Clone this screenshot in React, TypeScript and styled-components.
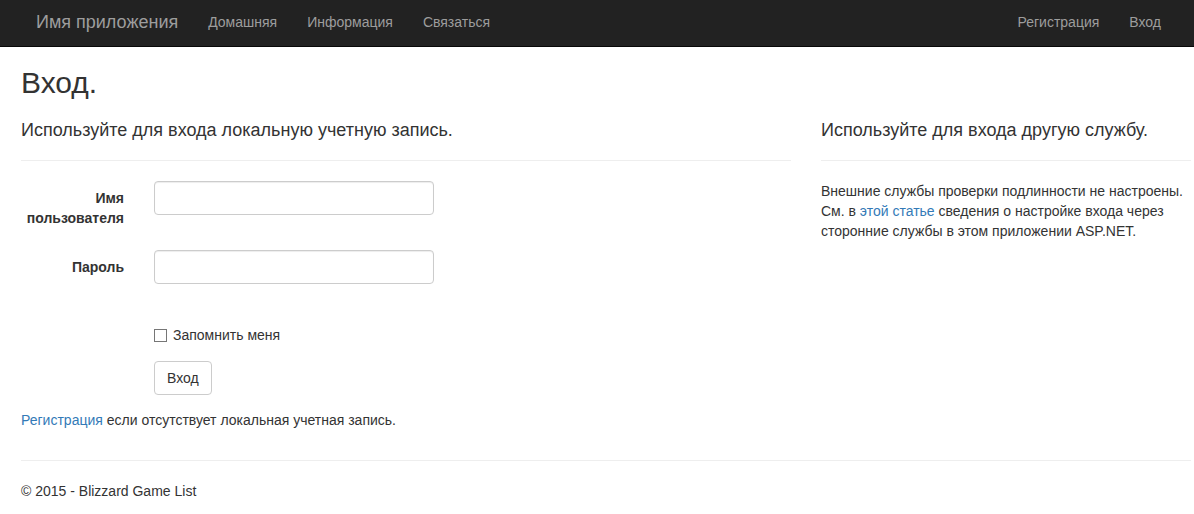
import styled, { createGlobalStyle } from 'styled-components';

const GlobalStyle = createGlobalStyle`
  body {
    margin: 0;
    font-family: "Liberation Sans", Arial, sans-serif;
    font-size: 14px;
    line-height: 20px;
    color: #333;
    background: #fff;
  }
  * {
    box-sizing: border-box;
  }
`;

const Navbar = styled.nav`
  height: 47px;
  background: #222;
  border-bottom: 1px solid #080808;
  display: flex;
  align-items: center;
  padding: 0 18px 2px 21px;
`;

const Brand = styled.a`
  padding: 0 15px;
  font-size: 18px;
  line-height: 20px;
  color: #9d9d9d;
  text-decoration: none;
`;

const NavList = styled.div<{ $right?: boolean }>`
  display: flex;
  margin-left: ${(p) => (p.$right ? 'auto' : '0')};
`;

const NavLink = styled.a`
  padding: 0 15px;
  font-size: 14px;
  line-height: 20px;
  color: #9d9d9d;
  text-decoration: none;
`;

const Body = styled.main`
  padding: 0 3px 0 21px;
`;

const Title = styled.h2`
  margin: 19px 0 0;
  font-size: 30px;
  line-height: 33px;
  font-weight: normal;
`;

const Row = styled.div`
  display: flex;
  gap: 30px;
  margin-top: 21px;
`;

const Column = styled.section<{ $width?: string }>`
  width: ${(p) => p.$width ?? 'auto'};
  flex: ${(p) => (p.$width ? 'none' : '1')};
`;

const SubTitle = styled.h4`
  margin: 0;
  font-size: 18px;
  line-height: 20px;
  font-weight: normal;
`;

const Divider = styled.hr`
  margin: 20px 0;
  border: 0;
  border-top: 1px solid #eee;
`;

const FormGroup = styled.div`
  display: grid;
  grid-template-columns: 103px 280px;
  column-gap: 30px;
  margin-bottom: 15px;
`;

const Label = styled.label`
  grid-column: 1;
  padding-top: 7px;
  margin-bottom: 5px;
  text-align: right;
  font-weight: bold;
`;

const Field = styled.div`
  grid-column: 2;
`;

const Input = styled.input`
  display: block;
  width: 280px;
  height: 34px;
  padding: 6px 12px;
  font: inherit;
  color: #555;
  background: #fff;
  border: 1px solid #ccc;
  border-radius: 4px;
  box-shadow: inset 0 1px 1px rgba(0, 0, 0, 0.075);
  outline: none;
`;

const Validation = styled.span`
  display: block;
  min-height: 20px;
  color: #a94442;
`;

const CheckboxLabel = styled.label`
  display: flex;
  align-items: center;
  padding: 6px 0 1px;
  line-height: 20px;
  cursor: pointer;
`;

const CheckBox = styled.input`
  appearance: none;
  width: 13px;
  height: 13px;
  margin: 0 6px 0 0;
  border: 1px solid #767676;
  border-radius: 0;
  background: #fff;
`;

const Button = styled.button`
  height: 34px;
  padding: 6px 12px;
  font: inherit;
  color: #333;
  background: #fff;
  border: 1px solid #ccc;
  border-radius: 4px;
`;

const Paragraph = styled.p`
  margin: 0 0 10px;
`;

const Link = styled.a`
  color: #337ab7;
  text-decoration: none;
`;

const Footer = styled.footer`
  margin-top: 20px;
`;

const FooterText = styled.p`
  margin: 0 0 10px;
`;

const App = () => {
  return (
    <>
      <GlobalStyle />
      <Navbar>
        <Brand href="#">Имя приложения</Brand>
        <NavList>
          <NavLink href="#">Домашняя</NavLink>
          <NavLink href="#">Информация</NavLink>
          <NavLink href="#">Связаться</NavLink>
        </NavList>
        <NavList $right>
          <NavLink href="#">Регистрация</NavLink>
          <NavLink href="#">Вход</NavLink>
        </NavList>
      </Navbar>

      <Body>
        <Title>Вход.</Title>
        <Row>
          <Column $width="770px">
            <SubTitle>Используйте для входа локальную учетную запись.</SubTitle>
            <Divider />
            <form onSubmit={(e) => e.preventDefault()}>
              <FormGroup>
                <Label htmlFor="user">
                  Имя
                  <br />
                  пользователя
                </Label>
                <Field>
                  <Input id="user" type="text" />
                  <Validation />
                </Field>
              </FormGroup>
              <FormGroup>
                <Label htmlFor="pass">Пароль</Label>
                <Field>
                  <Input id="pass" type="password" />
                  <Validation />
                </Field>
              </FormGroup>
              <FormGroup>
                <Field>
                  <CheckboxLabel>
                    <CheckBox type="checkbox" />
                    Запомнить меня
                  </CheckboxLabel>
                </Field>
              </FormGroup>
              <FormGroup>
                <Field>
                  <Button type="submit">Вход</Button>
                </Field>
              </FormGroup>
              <Paragraph>
                <Link href="#">Регистрация</Link> если отсутствует локальная
                учетная запись.
              </Paragraph>
            </form>
          </Column>
          <Column>
            <SubTitle>Используйте для входа другую службу.</SubTitle>
            <Divider />
            <Paragraph>
              Внешние службы проверки подлинности не настроены. См. в{' '}
              <Link href="#">этой статье</Link> сведения о настройке входа
              через сторонние службы в этом приложении ASP.NET.
            </Paragraph>
          </Column>
        </Row>
        <Footer>
          <Divider />
          <FooterText>© 2015 - Blizzard Game List</FooterText>
        </Footer>
      </Body>
    </>
  );
};

export default App;
